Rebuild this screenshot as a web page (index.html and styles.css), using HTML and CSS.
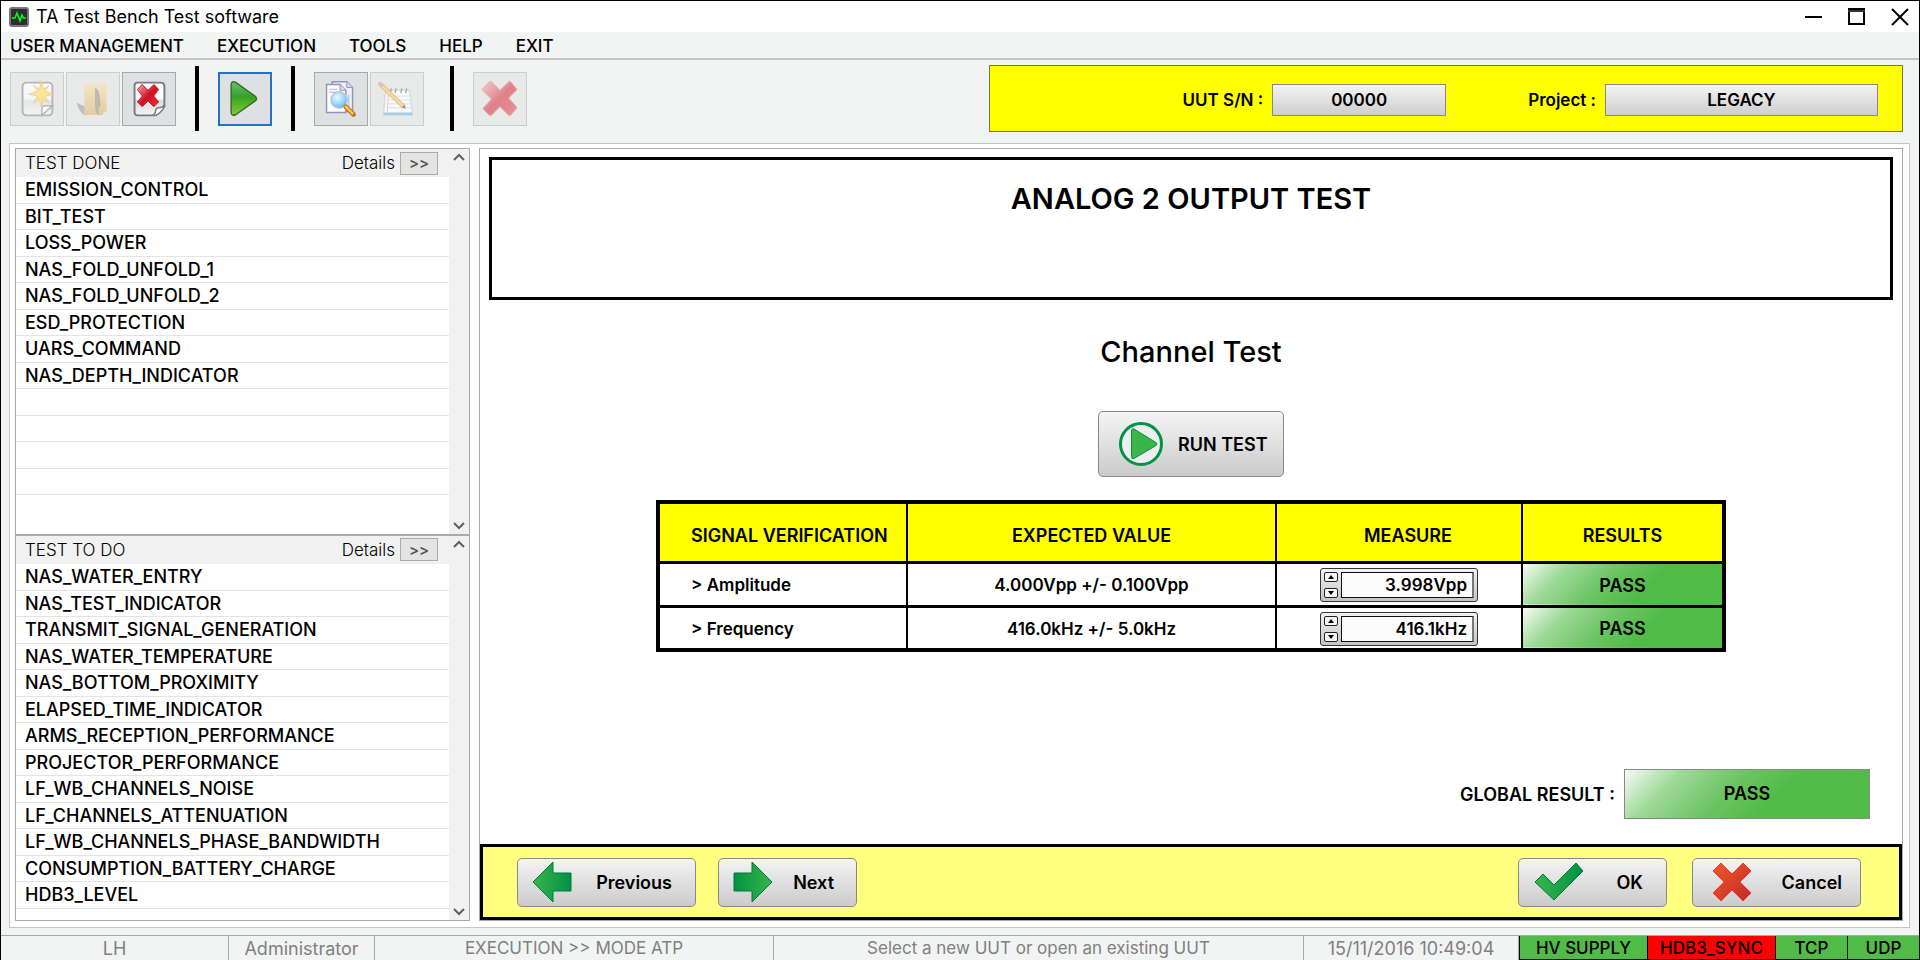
FILE: index.html
```html
<!DOCTYPE html>
<html lang="en">
<head>
<meta charset="utf-8">
<title>TA Test Bench Test software</title>
<link rel="stylesheet" href="styles.css">
</head>
<body>
<svg class="defs" aria-hidden="true">
  <defs>
    <linearGradient id="page" x1="0" y1="0" x2="0" y2="1"><stop offset="0" stop-color="#fff"/><stop offset=".5" stop-color="#fafafa"/><stop offset=".55" stop-color="#d9dadb"/><stop offset="1" stop-color="#f4f4f4"/></linearGradient>
    <linearGradient id="red" x1="0" y1="0" x2="1" y2="1"><stop offset="0" stop-color="#f3a3a8"/><stop offset=".35" stop-color="#df4250"/><stop offset=".5" stop-color="#cf1124"/><stop offset="1" stop-color="#e0303c"/></linearGradient>
    <linearGradient id="play" x1="0" y1="0" x2="0" y2="1"><stop offset="0" stop-color="#6cc06a"/><stop offset=".45" stop-color="#34a02c"/><stop offset=".55" stop-color="#45ad1c"/><stop offset="1" stop-color="#86c83e"/></linearGradient>
    <linearGradient id="folder" x1="0" y1="0" x2="0" y2="1"><stop offset="0" stop-color="#f6dca0"/><stop offset="1" stop-color="#d5a552"/></linearGradient>
    <radialGradient id="lens" cx=".4" cy=".35" r=".7"><stop offset="0" stop-color="#e6fbff"/><stop offset=".6" stop-color="#97d8fa"/><stop offset="1" stop-color="#5fa8e6"/></radialGradient>
    <linearGradient id="arrowL" x1="0" x2="1"><stop offset="0" stop-color="#39b54a"/><stop offset="1" stop-color="#009245"/></linearGradient>
    <linearGradient id="arrowR" x1="1" x2="0"><stop offset="0" stop-color="#39b54a"/><stop offset="1" stop-color="#009245"/></linearGradient>
    <linearGradient id="cross" x1="0" y1="0" x2="1" y2="1"><stop offset="0" stop-color="#f15a24"/><stop offset="1" stop-color="#c1272d"/></linearGradient>
  </defs>
</svg>
<div class="window">
  <header class="titlebar">
    <svg class="app-icon" viewBox="0 0 20 20"><rect x="1" y="1" width="18" height="18" rx="2" fill="#2e2e30" stroke="#77777a" stroke-width="2"/><path d="M3 11h3l2-5 3 8 2-6 1.500 3H17" fill="none" stroke="#0f2" stroke-width="1.500"/></svg>
    <span class="app-title">TA Test Bench Test software</span>
    <div class="window-controls">
      <button type="button" aria-label="Minimize"><svg viewBox="0 0 20 20"><path d="M1 10h17" stroke="#000" stroke-width="2"/></svg></button>
      <button type="button" aria-label="Maximize"><svg viewBox="0 0 20 20"><path d="M2 2h15v15H2z" fill="none" stroke="#000" stroke-width="2"/><path d="M1 4h17" stroke="#333" stroke-width="2"/></svg></button>
      <button type="button" aria-label="Close"><svg viewBox="0 0 20 20"><path d="M2 2l16 16M18 2L2 18" stroke="#000" stroke-width="2"/></svg></button>
    </div>
  </header>
  <nav class="menubar">
    <a href="#user">USER MANAGEMENT</a><a href="#execution">EXECUTION</a><a href="#tools">TOOLS</a><a href="#help">HELP</a><a href="#exit">EXIT</a>
  </nav>
  <div class="toolbar">
    <div class="tools">
      <div class="tool-group">
        <button type="button" class="tool" disabled aria-label="New UUT"><svg viewBox="0 0 54 54"><rect x="12" y="10" width="31" height="34" rx="4" fill="url(#page)" stroke="#777b84" stroke-width="2"/><path d="M32 44v-7q0-3 3-3h8z" fill="#fff" stroke="#777b84" stroke-width="1.500"/><path d="M31.500 8l2 9 6-4-4 6 9 3-9 2 4 7-6-4-2 9-2-9-6 4 4-7-9-2 9-3-4-6 6 4z" fill="#ffd83d" stroke="#e0a53a" stroke-width=".8"/></svg></button>
        <button type="button" class="tool" disabled aria-label="Open UUT"><svg viewBox="0 0 54 54"><path d="M10 31l9 4v9q-6-2-9-13z" fill="#8c8c8c"/><path d="M18 11l14-1v33l-14 1z" fill="url(#folder)"/><path d="M29 15q5 2 5 10l4 4-1 14-5 1q-3-4-3-10z" fill="#8d8266"/><path d="M33 12l8-3v31l-8 4v-8l2-2z" fill="url(#folder)"/></svg></button>
        <button type="button" class="tool" aria-label="Delete UUT"><svg viewBox="0 0 54 54"><path d="M12 13q0-3 3-3h24q4 0 4 4v21l-9 9H15q-3 0-3-4z" fill="url(#page)" stroke="#777b84" stroke-width="2"/><path d="M31 44q3-2 3-5 0-3 3-3 4 0 6-3-1 7-9 11z" fill="#fff" stroke="#777b84" stroke-width="1.500"/><path d="M20 12l6 6 6-6 5 5-5 7 5 6-5 5-6-6-6 6-5-5 5-6-5-7z" fill="url(#red)" stroke="#c21a2a"/></svg></button>
      </div>
      <span class="separator"></span>
      <button type="button" class="tool active" aria-label="Run"><svg viewBox="0 0 54 54"><path d="M12 12q0-5 5-3l21 15q3 3 0 5L17 44q-5 2-5-3z" fill="url(#play)" stroke="#2e6b2d" stroke-width="1.500"/></svg></button>
      <span class="separator"></span>
      <div class="tool-group wide">
        <button type="button" class="tool" aria-label="Find report"><svg viewBox="0 0 54 54"><path d="M18 9h15l6 6v25H18z" fill="#eef0fb" stroke="#9392bd" stroke-width="1.500"/><path d="M12 12h14l6 6v23H12z" fill="#fff" stroke="#9392bd" stroke-width="1.500"/><path d="M26 12v6h6M33 9v6h6" fill="#d9d9ee" stroke="#9392bd"/><path d="M15 17h8M15 20h8M35 22v14" stroke="#c1c4e4" stroke-width="1.500"/><circle cx="25" cy="28" r="8.500" fill="url(#lens)" stroke="#b9c7d8" stroke-width="1.500"/><path d="M32 35l8 8" stroke="#b87326" stroke-width="5" stroke-linecap="round"/><path d="M32 35l7 7" stroke="#ffc64d" stroke-width="2.500" stroke-linecap="round"/></svg></button>
        <button type="button" class="tool" disabled aria-label="Edit notes"><svg viewBox="0 0 54 54"><path d="M15 18h25l3 25H13z" fill="#fff" stroke="#b3c8dc" stroke-width="1.500"/><path d="M13 41h30v3H13z" fill="#5aaade"/><path d="M17 24h22M17 28h23M16 32h25M16 36h25" stroke="#b9d2e8"/><path d="M18 19l-1 22" stroke="#e8a0a8"/><path d="M20 21l1-5M25 21l1-5M31 21l1-5M36 21l1-5" stroke="#666" stroke-width="1.500"/><path d="M10 12l24 23" stroke="#c98632" stroke-width="4.500"/><path d="M10 12l24 23" stroke="#ffc735" stroke-width="2.500"/><path d="M8 10l4 4" stroke="#dd8790" stroke-width="4"/><path d="M32 36l4 1-1-4z" fill="#333"/></svg></button>
      </div>
      <span class="separator"></span>
      <button type="button" class="tool" disabled aria-label="Abort"><svg viewBox="0 0 54 54"><path d="M18 9l9 9 9-9q1-1 2 0l6 7q1 1 0 2l-8 8 8 9q1 1 0 2l-6 7q-1 1-2 0l-9-9-9 9q-1 1-2 0l-6-6q-1-1 0-2l8-9-9-9q-1-1 0-2l7-7q1-1 2 0z" fill="url(#red)" stroke="#d56b75"/></svg></button>
    </div>
    <div class="uut">
      <label for="sn">UUT S/N :</label><input id="sn" class="sn" value="00000" readonly>
      <label for="project">Project :</label><input id="project" class="project" value="LEGACY" readonly>
    </div>
  </div>

  <main class="workspace">
    <aside class="sidebar">
      <section class="tests">
        <div class="tests-body">
          <div class="tests-head"><h2>TEST DONE</h2><label for="done-more">Details</label><button id="done-more" type="button">&gt;&gt;</button></div>
          <ul><li>EMISSION_CONTROL</li><li>BIT_TEST</li><li>LOSS_POWER</li><li>NAS_FOLD_UNFOLD_1</li><li>NAS_FOLD_UNFOLD_2</li><li>ESD_PROTECTION</li><li>UARS_COMMAND</li><li>NAS_DEPTH_INDICATOR</li><li></li><li></li><li></li><li></li></ul>
        </div>
        <div class="scroll"><svg viewBox="0 0 12 8"><path d="M1 7l5-5 5 5" fill="none" stroke="#606060" stroke-width="2"/></svg><svg viewBox="0 0 12 8"><path d="M1 1l5 5 5-5" fill="none" stroke="#606060" stroke-width="2"/></svg></div>
      </section>
      <section class="tests">
        <div class="tests-body">
          <div class="tests-head"><h2>TEST TO DO</h2><label for="todo-more">Details</label><button id="todo-more" type="button">&gt;&gt;</button></div>
          <ul><li>NAS_WATER_ENTRY</li><li>NAS_TEST_INDICATOR</li><li>TRANSMIT_SIGNAL_GENERATION</li><li>NAS_WATER_TEMPERATURE</li><li>NAS_BOTTOM_PROXIMITY</li><li>ELAPSED_TIME_INDICATOR</li><li>ARMS_RECEPTION_PERFORMANCE</li><li>PROJECTOR_PERFORMANCE</li><li>LF_WB_CHANNELS_NOISE</li><li>LF_CHANNELS_ATTENUATION</li><li>LF_WB_CHANNELS_PHASE_BANDWIDTH</li><li>CONSUMPTION_BATTERY_CHARGE</li><li>HDB3_LEVEL</li></ul>
        </div>
        <div class="scroll"><svg viewBox="0 0 12 8"><path d="M1 7l5-5 5 5" fill="none" stroke="#606060" stroke-width="2"/></svg><svg viewBox="0 0 12 8"><path d="M1 1l5 5 5-5" fill="none" stroke="#606060" stroke-width="2"/></svg></div>
      </section>
    </aside>

    <section class="panel">
      <div class="panel-body">
        <h1>ANALOG 2 OUTPUT TEST</h1>
        <h3>Channel Test</h3>
        <button type="button" class="button run"><svg viewBox="0 0 44 44"><circle cx="22" cy="22" r="20.500" fill="#eee" stroke="#009245" stroke-width="3"/><path d="M12.500 9q0-3 2.500-2l22 13.500q2 1.500 0 3L15 36.500q-2.500 1-2.500-2z" fill="#39b54a" stroke="#009245"/></svg>RUN TEST</button>
        <table>
          <colgroup><col class="c1"><col class="c2"><col class="c3"><col class="c4"></colgroup>
          <thead><tr><th>SIGNAL VERIFICATION</th><th>EXPECTED VALUE</th><th>MEASURE</th><th>RESULTS</th></tr></thead>
          <tbody>
            <tr><td id="amp">&gt; Amplitude</td><td>4.000Vpp +/- 0.100Vpp</td><td><div class="spinner"><span class="steps"><button type="button" aria-label="Increase amplitude"><svg viewBox="0 0 8 4"><path d="M1 4l3-4 3 4z"/></svg></button><button type="button" aria-label="Decrease amplitude"><svg viewBox="0 0 8 4"><path d="M1 0l3 4 3-4z"/></svg></button></span><input aria-labelledby="amp" value="3.998Vpp"></div></td><td class="pass">PASS</td></tr>
            <tr><td id="freq">&gt; Frequency</td><td>416.0kHz +/- 5.0kHz</td><td><div class="spinner"><span class="steps"><button type="button" aria-label="Increase frequency"><svg viewBox="0 0 8 4"><path d="M1 4l3-4 3 4z"/></svg></button><button type="button" aria-label="Decrease frequency"><svg viewBox="0 0 8 4"><path d="M1 0l3 4 3-4z"/></svg></button></span><input aria-labelledby="freq" value="416.1kHz"></div></td><td class="pass">PASS</td></tr>
          </tbody>
        </table>
        <div class="global"><span>GLOBAL RESULT :</span><output class="pass">PASS</output></div>
      </div>
      <footer class="actions">
        <button type="button" class="button prev"><svg viewBox="0 0 40 42"><path d="M1 21L21 1v11h18v18H21v11z" fill="url(#arrowL)" stroke="#00783c"/></svg><span>Previous</span></button>
        <button type="button" class="button next"><svg viewBox="0 0 40 42"><path d="M39 21L19 1v11H1v18h18v11z" fill="url(#arrowR)" stroke="#00783c"/></svg><span>Next</span></button>
        <button type="button" class="button ok"><svg viewBox="0 0 50 40"><path d="M1 20l8-8 11 11L42 1l7 8-29 29z" fill="url(#arrowL)" stroke="#00783c"/></svg><span>OK</span></button>
        <button type="button" class="button cancel"><svg viewBox="0 0 40 40"><path d="M9 1l11 11L31 1l8 8-11 11 11 11-8 8-11-11L9 39l-8-8 11-11L1 9z" fill="url(#cross)" stroke="#ff3b30"/></svg><span>Cancel</span></button>
      </footer>
    </section>
  </main>

  <footer class="status">
    <span class="s1">LH</span><span class="s2">Administrator</span><span class="s3">EXECUTION &gt;&gt; MODE ATP</span><span class="s4">Select a new UUT or open an existing UUT</span><span class="s5">15/11/2016 10:49:04</span>
    <span class="led hv">HV SUPPLY</span><span class="led hv fault">HDB3_SYNC</span><span class="led">TCP</span><span class="led">UDP</span>
  </footer>
</div>
</body>
</html>
```
FILE: styles.css
```css
* { box-sizing: border-box; }
body { margin: 0; font-family: Inter, "Liberation Sans", sans-serif; font-size: 17px; color: #000; }
button, input { font: inherit; color: inherit; margin: 0; padding: 0; }
h1, h2, h3, ul { margin: 0; padding: 0; }
svg { display: block; flex: none; }
.defs { position: absolute; width: 0; height: 0; }

.window { display: flex; flex-direction: column; min-height: 100vh; background: #f2f3f3; border: 1px solid #000; border-bottom: 0; }

.titlebar { display: flex; align-items: center; height: 31px; padding: 0 9px 0 8px; background: #fff; font-size: 18px; }
.app-icon { width: 20px; height: 20px; margin-right: 7px; }
.window-controls { display: flex; gap: 23px; margin-left: auto; }
.window-controls button { width: 20px; height: 20px; border: 0; background: none; }

.menubar { display: flex; align-items: center; gap: 33px; height: 28px; padding: 2px 9px 0; background: #f1f4f3; border-bottom: 2px solid #c4c4c4; font-weight: 500; }
.menubar a { color: inherit; text-decoration: none; }

.toolbar { display: flex; align-items: center; justify-content: space-between; height: 83px; padding: 0 16px 6px 9px; }
.tools { display: flex; align-items: center; gap: 20px; }
.tool-group { display: flex; gap: 2px; }
.wide { margin-right: 7px; }
.tool { width: 54px; height: 54px; border: 1px solid #a8a8a8; background: #dfe0e1; display: grid; place-items: center; }
.tool svg { width: 52px; height: 52px; }
.tool:disabled { opacity: .5; }
.tool.active { border: 2px solid #2472c8; }
.tool.active svg { width: 50px; height: 50px; }
.tools { gap: 19px; }
.separator { width: 4px; height: 65px; background: #000; }

.uut { display: flex; align-items: center; justify-content: flex-end; flex: 0 1 914px; height: 67px; padding: 2px 24px 0 0; background: #ff0; border: 1px solid #777748; font-weight: 600; }
.uut input { height: 32px; margin-left: 9px; text-align: center; border: 1px solid #888; background: linear-gradient(#f4f4f4, #cecece); font-weight: 600; min-width: 0; }
.uut .sn { width: 174px; margin-right: 82px; }
.uut .project { width: 273px; }

.workspace { flex: 1; display: flex; gap: 9px; margin: 0 9px 7px 8px; padding: 4px 6px 6px 5px; background: #fff; border: 1px solid #c4c4c4; }

.sidebar { flex: 0 0 455px; display: flex; flex-direction: column; border: 1px solid #aaa; }
.tests { flex: 1; display: flex; }
.tests + .tests { border-top: 2px solid #aaa; }
.tests-body { flex: 1; }
.tests-head { display: flex; align-items: center; height: 28px; padding: 0 11px 0 9px; background: #f1f1f1; font-weight: 300; }
.tests-head h2 { font-size: 17px; font-weight: 300; margin-right: auto; }
.tests-head button { width: 38px; height: 23px; margin-left: 5px; border: 1px solid #aaa; background: #e4e4e4; color: #555; font-size: 15px; font-weight: 600; line-height: 20px; }
.tests ul { list-style: none; font-size: 18px; }
.tests li { height: 27px; padding-left: 9px; line-height: 26px; border-bottom: 1px solid #e3e3e3; font-weight: 500; white-space: nowrap; }
.tests li:nth-child(even) { height: 26px; }
.scroll { width: 20px; display: flex; flex-direction: column; justify-content: space-between; align-items: center; padding: 4px 0; background: #f1f1f1; }
.scroll svg { width: 12px; height: 8px; }

.panel { flex: 1; min-width: 0; display: flex; flex-direction: column; border: 1px solid #aaa; }
.panel-body { flex: 1; display: flex; flex-direction: column; align-items: center; padding: 8px 9px 25px; }
h1 { align-self: stretch; height: 143px; padding-top: 22px; border: 3px solid #000; text-align: center; font-size: 29px; line-height: 34px; font-weight: 600; }
h3 { margin: 34px 0 41px; font-size: 29px; line-height: 36px; font-weight: 500; }
.button { display: flex; align-items: center; border: 1px solid #888; border-radius: 5px; background: linear-gradient(#f4f4f4, #cbcbcb); font-size: 18px; font-weight: 600; }
.run { width: 186px; height: 66px; padding-left: 20px; gap: 15px; }
.run svg { width: 44px; height: 44px; }

table { width: 1070px; max-width: 100%; table-layout: fixed; margin-top: 23px; border-collapse: collapse; border: 4px solid #000; font-weight: 600; }
.c1 { width: 249px; } .c2 { width: 369px; } .c3 { width: 246px; }
th, td { padding: 2px 0 0; border: 2px solid #000; text-align: center; }
th { height: 60px; padding-top: 6px; background: #ff0; font-size: 18px; font-weight: 600; border-bottom-width: 3px; }
th:nth-child(3) { padding-left: 18px; }
td { height: 44px; border-bottom-width: 3px; }
th:first-child, td:first-child { padding-left: 31px; text-align: left; white-space: nowrap; }
.pass { background: linear-gradient(135deg, #f8fcf8 0%, #9ed998 20%, #6cc463 42%, #50bb47 62%); font-size: 18px; }
.spinner { display: flex; align-items: stretch; width: 158px; height: 34px; margin: 0 auto; padding: 3px; gap: 3px; border: 1px solid #333; border-radius: 3px; background: linear-gradient(#f2f2f2, #c4c4c4); }
.steps { display: flex; flex-direction: column; justify-content: space-between; width: 14px; }
.steps button { height: 10px; border: 1px solid #222; border-radius: 2px; background: #f5f5f5; display: grid; place-items: center; }
.steps svg { width: 8px; height: 4px; }
.spinner input { flex: 1; min-width: 0; border: 1px solid #111; border-right: 2px solid #777; border-radius: 0; background: #fcfcfc; padding-right: 5px; text-align: right; font-weight: 600; }

.global { display: flex; align-items: center; gap: 9px; align-self: flex-end; margin: auto 23px 0 0; font-size: 18px; font-weight: 600; }
.global .pass { width: 246px; height: 50px; line-height: 48px; text-align: center; border: 1px solid #888; }

.actions { display: flex; align-items: center; height: 76px; padding: 0 38px 0 34px; background: #ffff80; border: 3px solid #000; }
.actions .button { height: 49px; }
.actions span { margin-left: auto; }
.prev { width: 179px; padding: 0 23px 0 14px; margin-right: 22px; }
.next { width: 139px; padding: 0 22px 0 14px; }
.prev svg, .next svg { width: 40px; height: 42px; }
.ok { width: 149px; padding: 0 23px 0 15px; margin: 0 25px 0 auto; }
.ok svg { width: 50px; height: 40px; }
.cancel { width: 169px; padding: 0 18px 0 19px; }
.cancel svg { width: 40px; height: 40px; }

.status { display: flex; height: 25px; line-height: 25px; border-top: 1px solid #aaa; color: #808080; text-align: center; overflow: hidden; }
.status span { border-right: 1px solid #aaa; white-space: nowrap; }
.s1 { width: 228px; } .s2 { width: 146px; } .s3 { width: 399px; } .s4 { flex: 1; }
.s5 { width: 215px; }
.s1, .s2, .s5 { font-size: 18px; }
.status .led { width: 72px; margin-top: -1px; border: 1px solid #000; border-right: 0; background: #50bb47; color: #000; font-weight: 500; }
.status .hv { width: 128px; }
.status .fault { background: #f00; }
```
